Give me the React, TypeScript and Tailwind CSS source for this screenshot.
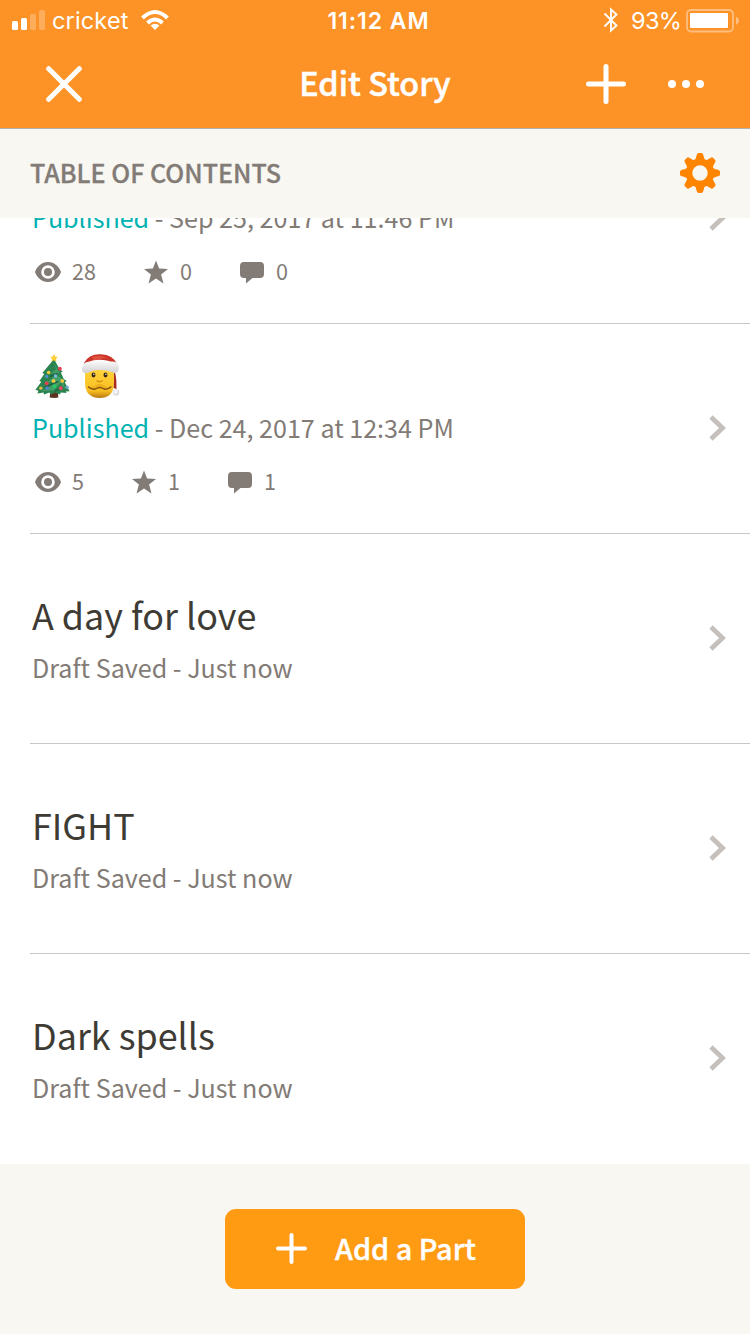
import type { ReactNode } from 'react';

type Part = {
    id: number;
    title: ReactNode;
    published?: boolean;
    date: string;
    stats?: { views: number; votes: number; comments: number };
};

const parts: Part[] = [
    { id: 1, title: '', published: true, date: 'Sep 25, 2017 at 11:46 PM', stats: { views: 28, votes: 0, comments: 0 } },
    {
        id: 2,
        title: (
            <span className="flex gap-[7px] pl-[3px] pt-1">
                <TreeEmoji />
                <SantaEmoji />
            </span>
        ),
        published: true,
        date: 'Dec 24, 2017 at 12:34 PM',
        stats: { views: 5, votes: 1, comments: 1 },
    },
    { id: 3, title: 'A day for love', date: 'Just now' },
    { id: 4, title: 'FIGHT', date: 'Just now' },
    { id: 5, title: 'Dark spells', date: 'Just now' },
];

function TreeEmoji() {
    return (
        <svg className="w-[39px] h-[45px]" viewBox="0 0 40 46">
            <path d="M16 36h7l1 8.500q-4.500 1-9 0z" fill="#5c3320" />
            <path d="M19.500 5l5.500 10 3.500 3-2 1 3 6.500 3 2-2 1.500 5 9-4 .5 1 1.500-6-.5-1 2-5-2-4 2-2-2-5 2-1-2-6 1 1-3-3-1 6-8-2-1 5-7-2-1z" fill="#2b8450" />
            <path d="M19.500 8l2 8-6 4 8-1-8 8-6 2 12-1-9 8-7 2 14-1 7-8 5 8-4-12-5-3 3-2-4-7z" fill="#45a068" />
            <path d="M15 23l9-3M10 34l14-6M20 38l8-3" stroke="#1b6341" strokeWidth="1.500" />
            <path d="M19.500 0l1.200 2.600 2.900.3-2.100 2 .6 2.800-2.600-1.400-2.600 1.400.6-2.800-2.100-2 2.900-.3z" fill="#ffcf34" />
            <circle cx="25.500" cy="15" r="2" fill="#e64257" />
            <circle cx="14" cy="19" r="1.800" fill="#f5c83e" />
            <circle cx="12" cy="23" r="1.700" fill="#4f91c8" />
            <circle cx="21" cy="22.500" r="1.800" fill="#7eb8dc" />
            <circle cx="19" cy="27.500" r="2" fill="#f5ca45" />
            <circle cx="28" cy="27.500" r="2" fill="#f2c742" />
            <circle cx="12" cy="30" r="2" fill="#e34252" />
            <circle cx="20" cy="33" r="2" fill="#25c965" />
            <circle cx="12.500" cy="35" r="2" fill="#4d88c2" />
            <circle cx="26.500" cy="35" r="2" fill="#e84a62" />
            <circle cx="33" cy="34" r="1.700" fill="#6faed4" />
            <circle cx="6" cy="35" r="1.700" fill="#e1bd4c" />
        </svg>
    );
}

function SantaEmoji() {
    return (
        <svg className="w-[42px] h-[46px]" viewBox="0 0 42 46">
            <defs>
                <linearGradient id="face" x1="0" y1="0" x2="0" y2="1">
                    <stop offset="0" stopColor="#ffd43b" />
                    <stop offset=".75" stopColor="#f9bf22" />
                    <stop offset="1" stopColor="#b97812" />
                </linearGradient>
                <linearGradient id="fur" x1="0" y1="0" x2="0" y2="1">
                    <stop offset="0" stopColor="#ffffff" />
                    <stop offset="1" stopColor="#cfcfd2" />
                </linearGradient>
            </defs>
            <path d="M31 13q5 5 4.500 22l-3-1z" fill="#a92b25" />
            <path d="M4 15v13q0 10 5 13 3 3 9.500 3t10-3q4.500-4 4.500-13V15z" fill="url(#face)" />
            <path d="M3 9Q8-.5 20 .3 32 1 36 10l-2 4L18 9 5 14z" fill="#ca3429" />
            <path d="M11 3q8-3 15 1-8 0-13 3z" fill="#e0503f" />
            <path d="M2.500 11q1-3 4-3Q18 4 30 7.500q6-.5 7.500 4 1 4-1 6.500-3 2-6 0-5-2-12-2-7-.5-11 2.500-4 2-6-1-1.500-3 1-6.500z" fill="url(#fur)" />
            <ellipse cx="12.500" cy="21" rx="2" ry="2.400" fill="#382719" />
            <ellipse cx="24.500" cy="21" rx="2" ry="2.400" fill="#382719" />
            <circle cx="12.900" cy="20.200" r=".7" fill="#fff" />
            <circle cx="24.900" cy="20.200" r=".7" fill="#fff" />
            <path d="M15.500 26.500q3.200 2.500 6.200 0" fill="none" stroke="#d78e12" strokeWidth="1.500" />
            <path d="M7 32.500q6 1.500 9-2 2.500-1 5 0 3 3.500 9 2-4 4-9 2.500-2.500-1.500-5 0-5 1.500-9-2.500z" fill="#efae1c" />
            <path d="M7 32.500q3 3.500 7.500 2.500 2.500-1.500 4.200-1.500t4.200 1.500q4.500 1 7.500-2.500" fill="none" stroke="#855410" strokeWidth="1.300" />
            <circle cx="35" cy="38.500" r="3.200" fill="#dddde0" />
            <circle cx="34.600" cy="37.700" r="2" fill="#f6f6f7" />
        </svg>
    );
}

function GearIcon() {
    return (
        <svg className="w-10 h-10" viewBox="-20 -20 40 40" fill="#ff8500">
            {[0, 45, 90, 135, 180, 225, 270, 315].map((angle) => (
                <path key={angle} transform={`rotate(${angle})`} d="M-7-11Q-3.800-13.500-3.300-18Q-3-20-1.200-20H1.200Q3-20 3.300-18Q3.800-13.500 7-11z" />
            ))}
            <circle r="11" fill="none" stroke="#ff8500" strokeWidth="6.600" />
        </svg>
    );
}

function StatusBar() {
    return (
        <div className="h-10 grid grid-cols-3 pl-3 pr-[11px] font-['Inter',sans-serif] text-[23.500px] leading-[42px]">
            <div className="flex">
                <svg className="w-[34px] h-10 mr-[6px]" viewBox="0 0 34 40" fill="#fff">
                    <rect x="0" y="21" width="6" height="9" rx="1.500" />
                    <rect x="9" y="18" width="6" height="12" rx="1.500" />
                    <rect x="18" y="14" width="6" height="16" rx="1.500" opacity=".25" />
                    <rect x="27" y="10" width="6" height="20" rx="1.500" opacity=".25" />
                </svg>
                <span className="w-[88px] tracking-[0.150px]">cricket</span>
                <svg className="w-[30px] h-10" viewBox="0 0 30 40" fill="none" stroke="#fff" strokeWidth="4">
                    <path d="M2.500 18Q15 6 27.500 18" />
                    <path d="M7.500 23Q15 16 22.500 23" />
                    <path d="M15 30l-4.500-4.500Q15 22 19.500 25.500z" fill="#fff" stroke="none" />
                </svg>
            </div>
            <div className="text-center font-semibold text-[23px] tracking-[0.950px] pl-[6px]">11:12 AM</div>
            <div className="flex justify-end">
                <svg className="w-[16px] h-10 mr-3" viewBox="0 0 16 40" fill="none" stroke="#fff" strokeWidth="1.900">
                    <path d="M1.500 13.500l12 12L8 30.500v-21l5.500 5L1.500 26.500" />
                </svg>
                <span className="w-[55px] tracking-[-0.600px]">93%</span>
                <svg className="w-[53px] h-10" viewBox="0 0 53 40" fill="#fff">
                    <rect x="1" y="10" width="46" height="21.500" rx="4" fill="none" stroke="#fff" strokeWidth="1.800" opacity=".42" />
                    <rect x="4" y="13" width="38" height="15" rx="1" />
                    <path d="M50 16.500q3 1.500 3 4.200t-3 4.300z" opacity=".42" />
                </svg>
            </div>
        </div>
    );
}

function Stats({ views, votes, comments }: { views: number; votes: number; comments: number }) {
    return (
        <div className="mt-[25px] pl-[3px] h-6 flex items-center text-[21.600px] leading-[24px] text-[#827b76]">
            <svg className="w-[26px] h-6 mr-[11px] overflow-visible" viewBox="0 0 26 24">
                <path fill="#827b76" fillRule="evenodd" d="M13 2C6.500 2 2 6.500 0 12c2 5.500 6.500 10 13 10s11-4.500 13-10C24 6.500 19.500 2 13 2zm0 3.200a6.800 6.800 0 1 1 0 13.600 6.800 6.800 0 0 1 0-13.600z" />
                <circle cx="13" cy="12" r="4" fill="#827b76" />
            </svg>
            <span className="pb-[2px]">{views}</span>
            <svg className="w-6 h-6 ml-12 mr-3" viewBox="0 0 24 24" fill="#827b76">
                <path d="M12 0.500l3.100 8.100 8.900.4-6.900 5.600 2.400 9L12 18.500l-7.500 5.100 2.400-9L0 9l8.900-.4z" />
            </svg>
            <span className="pb-[2px]">{votes}</span>
            <svg className="w-6 h-6 ml-12 mr-3" viewBox="0 0 24 24" fill="#827b76">
                <path d="M4 2h16q4 0 4 4v8q0 4-4 4h-7.500L6 23.500V18H4q-4 0-4-4V6q0-4 4-4z" />
            </svg>
            <span className="pb-[2px]">{comments}</span>
        </div>
    );
}

function PartRow({ part }: { part: Part }) {
    return (
        <div className="ml-[30px] h-[210px] shrink-0 flex items-center justify-between border-b border-[#c7c7c7] last:border-transparent">
            <div className={`h-full pl-[2px] ${part.stats ? 'pt-[26px]' : 'pt-14'}`}>
                <div className="h-12 text-[35.900px] leading-[48px] text-[#3e3b35]">{part.title}</div>
                <div className="mt-[11px] h-9 text-[25.100px] leading-[36px] text-[#827b76]">
                    {part.published ? <span className="text-[#00b2b2]">Published</span> : 'Draft Saved'} - {part.date}
                </div>
                {part.stats && <Stats {...part.stats} />}
            </div>
            <svg className="w-[17px] h-[26px] mr-6 mb-px" viewBox="0 0 17 26" fill="none" stroke="#c5c0bc" strokeWidth="4.800">
                <path d="M2 2l11.500 11L2 24" />
            </svg>
        </div>
    );
}

export default function App() {
    return (
        <main className="w-[750px] h-[1334px] flex flex-col overflow-hidden bg-white font-['Noto_Sans_CJK_SC',sans-serif]">
            <header className="h-[129px] shrink-0 bg-[#fd9226] text-white border-b border-[#b2b2ae]">
                <StatusBar />
                <div className="h-[88px] grid grid-cols-3 items-center">
                    <svg className="w-9 h-9 ml-[46px]" viewBox="0 0 36 36" stroke="#fff" strokeWidth="5" strokeLinecap="round">
                        <path d="M2.700 2.700l30.600 30.600M33.300 2.700L2.700 33.300" />
                    </svg>
                    <h1 className="pb-1 text-center text-[32.400px] leading-[40px] font-medium [-webkit-text-stroke:0.500px_white]">Edit Story</h1>
                    <div className="flex items-center justify-end pr-[46px]">
                        <svg className="w-10 h-10 mr-[42px]" viewBox="0 0 40 40" stroke="#fff" strokeWidth="5" strokeLinecap="round">
                            <path d="M20 2.500v35M2.500 20h35" />
                        </svg>
                        <svg className="w-9 h-2" viewBox="0 0 36 8" fill="#fff">
                            <circle cx="4" cy="4" r="4" />
                            <circle cx="18" cy="4" r="4" />
                            <circle cx="32" cy="4" r="4" />
                        </svg>
                    </div>
                </div>
            </header>

            <div className="h-[89px] shrink-0 pl-[30px] pr-[30px] pb-px flex items-center justify-between bg-[#f8f7f2]">
                <h2 className="pb-[3px] text-[25.100px] leading-[36px] font-medium text-[#827b76] [-webkit-text-stroke:0.300px_#827b76]">TABLE OF CONTENTS</h2>
                <GearIcon />
            </div>

            {/* Scrolled to the bottom, first part is cut off by the section header */}
            <div className="h-[946px] shrink-0 flex flex-col justify-end overflow-hidden">
                {parts.map((part) => (
                    <PartRow key={part.id} part={part} />
                ))}
            </div>

            <footer className="h-[170px] shrink-0 flex items-center justify-center bg-[#f8f7f2]">
                <button className="w-[300px] h-20 pl-[51px] flex items-center rounded-[11px] bg-[#ff9a13] text-white text-[28.800px] leading-[40px] font-medium [-webkit-text-stroke:0.400px_white]">
                    <svg className="w-[31px] h-[31px] mr-7 mb-[2px]" viewBox="0 0 31 31" stroke="#fff" strokeWidth="4" strokeLinecap="round">
                        <path d="M15.500 2v27M2 15.500h27" />
                    </svg>
                    <span className="pb-[2px]">Add a Part</span>
                </button>
            </footer>
        </main>
    );
}
